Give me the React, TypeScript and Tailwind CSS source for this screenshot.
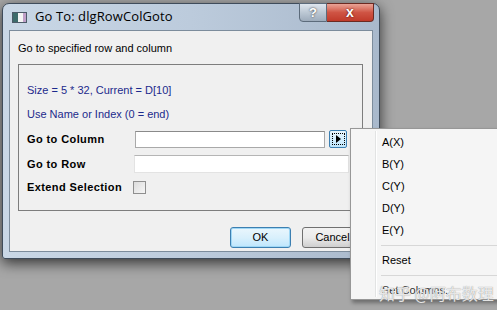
import React from 'react';

const ui = "font-['Liberation_Sans',Arial,sans-serif]";

const MenuItem: React.FC<{ label: string }> = ({ label }) => (
  <div className="h-[22px] flex items-center pl-[31px] text-[11px] text-black">{label}</div>
);

const Separator: React.FC = () => (
  <div className="h-[8px] flex items-center pl-[30px] pr-[2px]">
    <div className="h-px w-full bg-[#d7d7d7]" />
  </div>
);

export default function App() {
  return (
    <div className={`relative w-[497px] h-[310px] overflow-hidden bg-[#a7a7a7] ${ui}`}>
      {/* dialog window */}
      <div className="absolute left-[2px] top-[3px] w-[378px] h-[256px] flex flex-col rounded-t-[7px] rounded-b-[3px] border border-[#3f4c5b] bg-gradient-to-r from-[#c9d7e6] via-[#bccbdc] to-[#a9b9cc] shadow-[0_4px_14px_rgba(0,0,0,0.7)]">
        {/* title bar */}
        <div className="relative h-[26px] flex items-center pl-[9px] gap-[8px]">
          <div className="w-[15px] h-[11px] flex border border-[#4c5a68] bg-white">
            <div className="w-[5px] bg-[#3d6b6b]" />
            <div className="flex-1 bg-[#f4f4f4]" />
            <div className="w-[3px] bg-[#c0a0c8]" />
          </div>
          <span className="text-[13px] text-black font-['Open_Sans',sans-serif] tracking-[0.1px]">Go To: dlgRowColGoto</span>
          <div className="absolute right-[5px] top-[-1px] flex">
            <div className="w-[28px] h-[19px] flex items-center justify-center rounded-bl-[4px] border border-[#5c6b7b] bg-gradient-to-b from-[#dfe6ee] via-[#bcc8d4] to-[#9eacbc] text-white font-bold text-[13px] [text-shadow:0_0_2px_#222]">?</div>
            <div className="w-[47px] h-[19px] flex items-center justify-center rounded-br-[4px] border border-l-0 border-[#6b2a22] bg-gradient-to-b from-[#e9a396] via-[#cf5444] to-[#c03a2a] text-white font-bold text-[14px] [text-shadow:0_0_2px_#400]">x</div>
          </div>
        </div>

        {/* client area */}
        <div className="flex-1 mx-[6px] mb-[6px] flex flex-col bg-[#f0f0f0] border border-[#7c8c9c]">
          <div className="pl-[8px] pt-[9px] h-[33px] text-[11px] text-black">Go to specified row and column</div>

          {/* group box */}
          <div className="ml-[8px] w-[345px] h-[147px] border border-[#7d7d7d] flex flex-col pl-[8px] pt-[17px] text-[11px]">
            <div className="h-[24px] text-[#1c2a8c]">Size = 5 * 32, Current = D[10]</div>
            <div className="h-[21px] text-[#1c2a8c]">Use Name or Index (0 = end)</div>

            <div className="h-[24px] flex items-center">
              <span className="w-[107px] font-bold tracking-[0.4px]">Go to Column</span>
              <div className="ml-[1px] w-[190px] h-[17px] bg-white border border-[#a9a9a9] border-t-[#8a8a8a]" />
              <div className="ml-[4px] w-[18px] h-[18px] rounded-[2px] border border-[#3c7fb1] bg-gradient-to-b from-[#eaf6fd] to-[#bee6fd] flex items-center justify-center">
                <div className="w-[13px] h-[12px] border border-dotted border-black flex items-center justify-center">
                  <div className="w-0 h-0 border-y-[4px] border-y-transparent border-l-[5px] border-l-black" />
                </div>
              </div>
            </div>

            <div className="h-[26px] flex items-center">
              <span className="w-[107px] font-bold tracking-[0.4px]">Go to Row</span>
              <div className="w-[215px] h-[18px] bg-white border border-[#e3e3e3] border-t-[#b5b5b5]" />
            </div>

            <div className="h-[20px] flex items-center">
              <span className="w-[106px] font-bold tracking-[0.4px]">Extend Selection</span>
              <div className="w-[13px] h-[13px] border border-[#8f8f8f] bg-gradient-to-br from-[#dcdcdc] to-[#f6f6f6]" />
            </div>
          </div>

          {/* buttons */}
          <div className="mt-[16px] flex pl-[220px] gap-[11px]">
            <div className="w-[61px] h-[21px] rounded-[3px] border border-[#3c7fb1] bg-gradient-to-b from-[#eaf6fd] via-[#d9f0fc] to-[#bee6fd] flex items-center justify-center text-[11px] shadow-[inset_0_0_0_1px_#9fd7f5]">OK</div>
            <div className="w-[61px] h-[21px] rounded-[3px] border border-[#707070] bg-gradient-to-b from-[#f2f2f2] via-[#ebebeb] to-[#cfcfcf] flex items-center justify-center text-[11px]">Cancel</div>
          </div>
        </div>
      </div>

      {/* popup menu */}
      <div className="absolute left-[350px] top-[128px] w-[150px] h-[172px] border border-[#979797] bg-[#f5f5f5] shadow-[2px_3px_4px_rgba(0,0,0,0.35)] text-[11px]">
        <div className="absolute left-[24px] top-[2px] bottom-[2px] w-[2px] border-l border-[#e2e3e3] bg-white" />
        <div className="relative pt-[2px]">
          <MenuItem label="A(X)" />
          <MenuItem label="B(Y)" />
          <MenuItem label="C(Y)" />
          <MenuItem label="D(Y)" />
          <MenuItem label="E(Y)" />
          <Separator />
          <MenuItem label="Reset" />
          <Separator />
          <div className="relative h-[22px] flex items-center pl-[31px] text-[11px] text-[#333]">
            Set Columns...
            <span className="absolute left-[28px] top-[2px] text-[16px] text-white/80 font-['Noto_Sans_CJK_SC',sans-serif] [text-shadow:0_0_1px_#777]">知乎 @阿布数理</span>
          </div>
        </div>
      </div>
    </div>
  );
}
